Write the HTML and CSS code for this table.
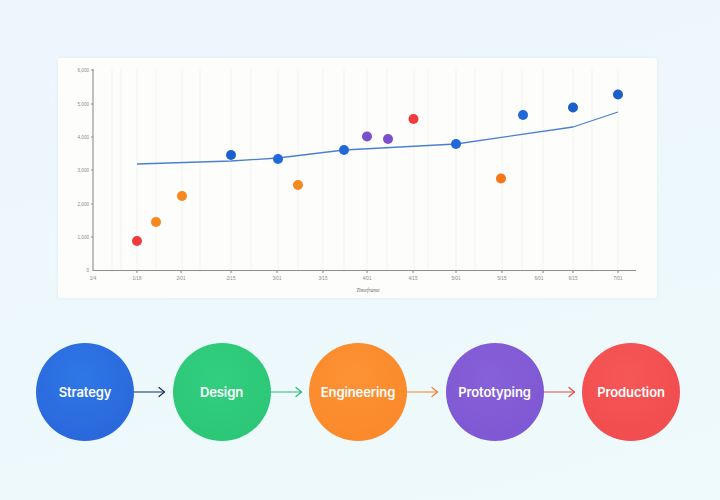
FILE: index.html
```html
<!DOCTYPE html>
<html>
<head>
<meta charset="utf-8">
<link rel="stylesheet" href="styles.css">
</head>
<body>
<div class="page">
  <div class="card">
    <svg class="chart" width="599" height="240" viewBox="58 58 599 240" xmlns="http://www.w3.org/2000/svg">
      <g class="grid">
        <line x1="112" y1="69" x2="112" y2="270"/>
        <line x1="121" y1="69" x2="121" y2="270"/>
        <line x1="137" y1="69" x2="137" y2="270"/>
        <line x1="156" y1="69" x2="156" y2="270"/>
        <line x1="182" y1="69" x2="182" y2="270"/>
        <line x1="200" y1="69" x2="200" y2="270"/>
        <line x1="231" y1="69" x2="231" y2="270"/>
        <line x1="251" y1="69" x2="251" y2="270"/>
        <line x1="278" y1="69" x2="278" y2="270"/>
        <line x1="298" y1="69" x2="298" y2="270"/>
        <line x1="323" y1="69" x2="323" y2="270"/>
        <line x1="344" y1="69" x2="344" y2="270"/>
        <line x1="367" y1="69" x2="367" y2="270"/>
        <line x1="387" y1="69" x2="387" y2="270"/>
        <line x1="414" y1="69" x2="414" y2="270"/>
        <line x1="428" y1="69" x2="428" y2="270"/>
        <line x1="456" y1="69" x2="456" y2="270"/>
        <line x1="475" y1="69" x2="475" y2="270"/>
        <line x1="502" y1="69" x2="502" y2="270"/>
        <line x1="522" y1="69" x2="522" y2="270"/>
        <line x1="543" y1="69" x2="543" y2="270"/>
        <line x1="573" y1="69" x2="573" y2="270"/>
        <line x1="592" y1="69" x2="592" y2="270"/>
        <line x1="618" y1="69" x2="618" y2="270"/>
      </g>
      <g class="axis">
        <line x1="93" y1="69" x2="93" y2="271"/>
        <line x1="93" y1="270.5" x2="636" y2="270.5"/>
        <line x1="91" y1="70" x2="93" y2="70"/>
        <line x1="91" y1="104" x2="93" y2="104"/>
        <line x1="91" y1="137" x2="93" y2="137"/>
        <line x1="91" y1="170" x2="93" y2="170"/>
        <line x1="91" y1="204" x2="93" y2="204"/>
        <line x1="91" y1="237" x2="93" y2="237"/>
        <line x1="137" y1="271" x2="137" y2="273"/>
        <line x1="181" y1="271" x2="181" y2="273"/>
        <line x1="231" y1="271" x2="231" y2="273"/>
        <line x1="277" y1="271" x2="277" y2="273"/>
        <line x1="323" y1="271" x2="323" y2="273"/>
        <line x1="367" y1="271" x2="367" y2="273"/>
        <line x1="413" y1="271" x2="413" y2="273"/>
        <line x1="456" y1="271" x2="456" y2="273"/>
        <line x1="502" y1="271" x2="502" y2="273"/>
        <line x1="543" y1="271" x2="543" y2="273"/>
        <line x1="573" y1="271" x2="573" y2="273"/>
        <line x1="618" y1="271" x2="618" y2="273"/>
      </g>
      <g class="ylabels">
        <text x="89" y="71.5">6,000</text>
        <text x="89" y="105.5">5,000</text>
        <text x="89" y="138.5">4,000</text>
        <text x="89" y="171.5">3,000</text>
        <text x="89" y="205.5">2,000</text>
        <text x="89" y="238.5">1,000</text>
        <text x="89" y="271.5">0</text>
      </g>
      <g class="xlabels">
        <text x="93" y="280">1/4</text>
        <text x="137" y="280">1/18</text>
        <text x="181" y="280">2/01</text>
        <text x="231" y="280">2/15</text>
        <text x="277" y="280">3/01</text>
        <text x="323" y="280">3/15</text>
        <text x="367" y="280">4/01</text>
        <text x="413" y="280">4/15</text>
        <text x="456" y="280">5/01</text>
        <text x="502" y="280">5/15</text>
        <text x="539" y="280">6/01</text>
        <text x="573" y="280">6/15</text>
        <text x="618" y="280">7/01</text>
      </g>
      <text class="xtitle" x="368" y="291.5">Timeframe</text>
      <polyline class="trend" points="137,164 231,161 278,158 344,150 456,144 573,127 618,112"/>
      <g class="dots">
        <circle class="red" cx="137" cy="241" r="5"/>
        <circle class="orange" cx="156" cy="222" r="5"/>
        <circle class="orange" cx="182" cy="196" r="5"/>
        <circle class="navy" cx="231" cy="155" r="5"/>
        <circle class="blue" cx="278" cy="159" r="5"/>
        <circle class="orange" cx="298" cy="185" r="5"/>
        <circle class="blue" cx="344" cy="150" r="5"/>
        <circle class="purple" cx="367" cy="136.5" r="5"/>
        <circle class="purple" cx="388" cy="139" r="5"/>
        <circle class="red" cx="413.5" cy="119" r="5"/>
        <circle class="blue" cx="456" cy="144" r="5"/>
        <circle class="orange2" cx="501" cy="178.5" r="5"/>
        <circle class="blue" cx="523" cy="115" r="5"/>
        <circle class="navy" cx="573" cy="107.5" r="5"/>
        <circle class="navy" cx="618" cy="94.5" r="5"/>
      </g>
    </svg>
  </div>

  <div class="flow">
    <div class="step step-blue">Strategy</div>
    <div class="arrow arrow-navy">
      <svg width="32" height="12" viewBox="0 0 32 12"><line x1="0" y1="6" x2="30.5" y2="6"/><polyline points="25,1.5 30.5,6 25,10.5"/></svg>
    </div>
    <div class="step step-green">Design</div>
    <div class="arrow arrow-green">
      <svg width="32" height="12" viewBox="0 0 32 12"><line x1="0" y1="6" x2="30.5" y2="6"/><polyline points="25,1.5 30.5,6 25,10.5"/></svg>
    </div>
    <div class="step step-orange">Engineering</div>
    <div class="arrow arrow-orange">
      <svg width="32" height="12" viewBox="0 0 32 12"><line x1="0" y1="6" x2="30.5" y2="6"/><polyline points="25,1.5 30.5,6 25,10.5"/></svg>
    </div>
    <div class="step step-purple">Prototyping</div>
    <div class="arrow arrow-red">
      <svg width="32" height="12" viewBox="0 0 32 12"><line x1="0" y1="6" x2="30.5" y2="6"/><polyline points="25,1.5 30.5,6 25,10.5"/></svg>
    </div>
    <div class="step step-red">Production</div>
  </div>
</div>
</body>
</html>
```

FILE: styles.css
```css
html, body {
  margin: 0;
  padding: 0;
}
body {
  width: 720px;
  height: 500px;
  overflow: hidden;
  background: linear-gradient(165deg, #eff5fd 0%, #edf8fc 50%, #eefafb 100%);
  font-family: Inter, "Noto Sans", sans-serif;
}
.page {
  padding: 58px 0 0 0;
}
.card {
  margin-left: 58px;
  width: 599px;
  height: 240px;
  background: #fdfdfb;
  border-radius: 3px;
  box-shadow: 0 0 3px rgba(200, 225, 235, 0.5);
}
.chart {
  display: block;
}
.grid line {
  stroke: #f0f0ed;
  stroke-width: 0.8;
}
.axis line {
  stroke: #8e8e8e;
  stroke-width: 1.1;
}
.ylabels text {
  font-family: "Liberation Sans", sans-serif;
  font-size: 4.6px;
  fill: #8a8a8a;
  text-anchor: end;
}
.xlabels text {
  font-family: "Liberation Sans", sans-serif;
  font-size: 4.6px;
  fill: #8a8a8a;
  text-anchor: middle;
}
.xtitle {
  font-family: "Liberation Serif", serif;
  font-style: italic;
  font-size: 5.5px;
  fill: #666;
  text-anchor: middle;
}
.trend {
  fill: none;
  stroke: #4c80cf;
  stroke-width: 1.3;
  stroke-linejoin: round;
}
.dots .red { fill: #ee3b3b; }
.dots .orange { fill: #f7871f; }
.dots .orange2 { fill: #f5771a; }
.dots .navy { fill: #1b5fcb; }
.dots .blue { fill: #2169da; }
.dots .purple { fill: #7a4fcc; }

.flow {
  display: flex;
  align-items: center;
  margin-top: 45px;
  padding-left: 36px;
}
.step {
  flex: 0 0 98px;
  width: 98px;
  height: 98px;
  border-radius: 50%;
  display: flex;
  align-items: center;
  justify-content: center;
  color: #ffffff;
  font-weight: 600;
  font-size: 13px;
  letter-spacing: -0.1px;
}
.step-blue { background: radial-gradient(circle at 45% 35%, #2f77e6, #2a69dc 70%); }
.step-green { background: radial-gradient(circle at 45% 35%, #33cf80, #2cc878 70%); }
.step-orange { background: radial-gradient(circle at 45% 35%, #fd9236, #fb8a2a 70%); }
.step-purple { background: radial-gradient(circle at 45% 35%, #8761d9, #7f58d3 70%); }
.step-red { background: radial-gradient(circle at 45% 35%, #f55757, #f24d4f 70%); }

.arrow {
  flex: 0 0 38.5px;
  width: 38.5px;
  height: 12px;
}
.arrow svg {
  display: block;
}
.arrow line, .arrow polyline {
  fill: none;
  stroke-width: 1.2;
  stroke-linecap: round;
  stroke-linejoin: round;
}
.arrow-navy line, .arrow-navy polyline { stroke: #1d2f5e; }
.arrow-green line, .arrow-green polyline { stroke: #2fb874; }
.arrow-orange line, .arrow-orange polyline { stroke: #f0812a; }
.arrow-red line, .arrow-red polyline { stroke: #e34848; }
```
